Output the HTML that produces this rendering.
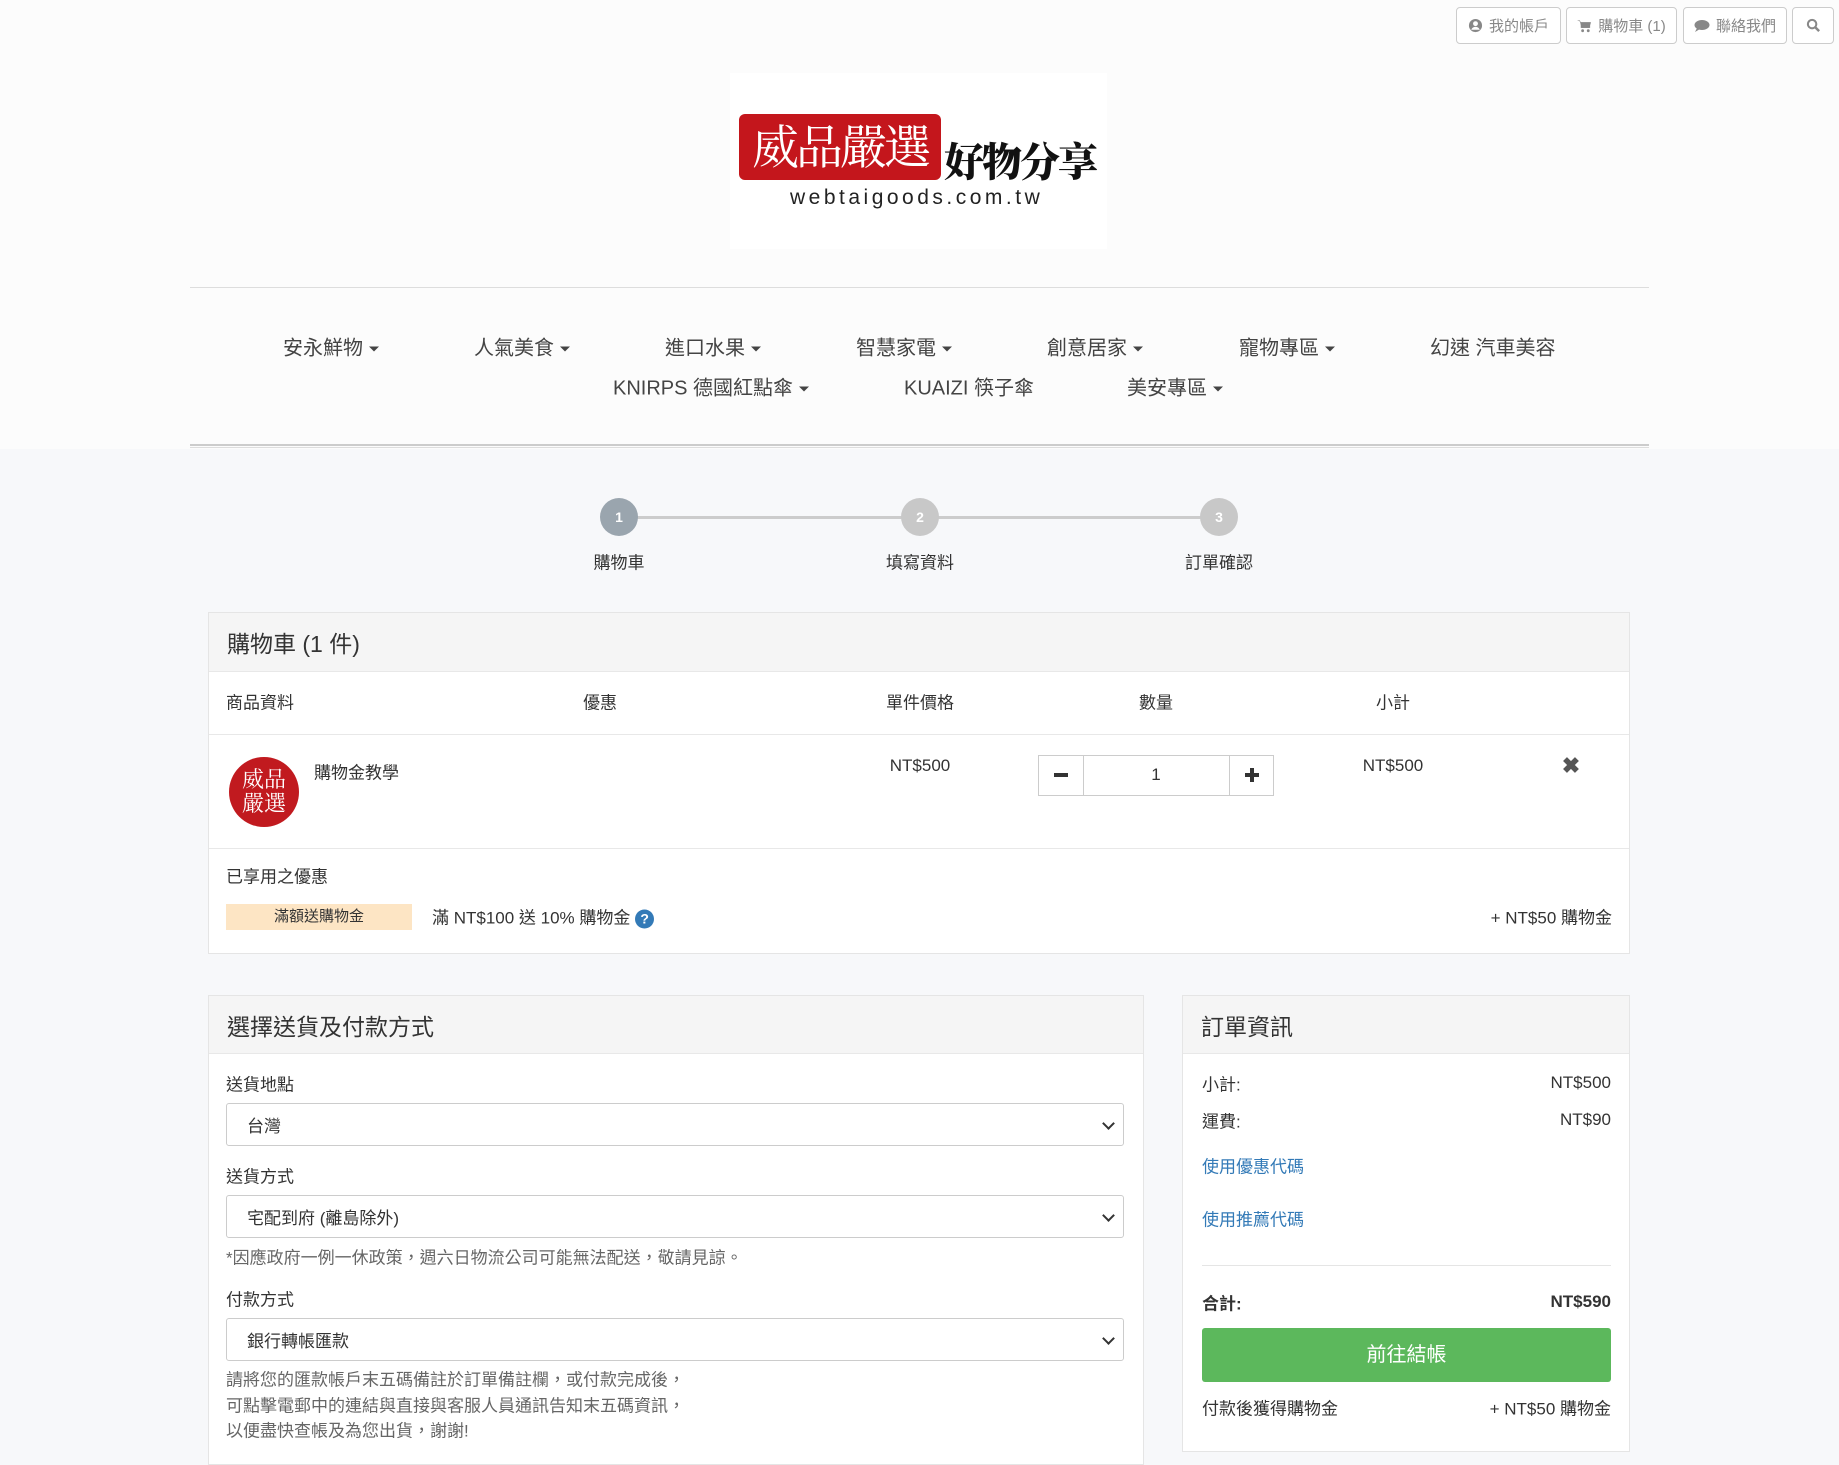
<!DOCTYPE html>
<html><head><meta charset="utf-8">
<style>
*{box-sizing:border-box;margin:0;padding:0}
body{width:1839px;height:1455px;overflow:hidden;background:#f7f8fa;font-family:"Liberation Sans","Noto Sans CJK TC",sans-serif;color:#333;font-size:17px;position:relative}
.a{position:absolute;white-space:nowrap}
.hdr{position:absolute;left:0;top:0;width:1839px;height:449px;background:#fcfcfc}
.tb{position:absolute;top:7px;height:37px;border:1px solid #ccc;border-radius:4px;background:#fff;color:#888;font-size:15px;display:flex;align-items:center;justify-content:center;gap:6px}
.nav{position:absolute;font-size:20px;color:#444;transform:translateY(-50%)}
.caret{display:inline-block;width:0;height:0;border-left:5px solid transparent;border-right:5px solid transparent;border-top:5px solid #444;vertical-align:middle;margin-left:6px}
.panel{position:absolute;background:#fff;border:1px solid #e5e5e5}
.ph{position:absolute;left:0;right:0;top:0;background:#f5f5f5;border-bottom:1px solid #e8e8e8;font-size:23px;padding-left:18px;display:flex;align-items:center}
.sel{position:absolute;left:226px;width:898px;height:43px;border:1px solid #ccc;border-radius:3px;background:#fff;padding-left:20px;display:flex;align-items:center;font-size:17px}
.sel:after{content:"";position:absolute;right:10px;top:15px;width:7px;height:7px;border-right:2px solid #333;border-bottom:2px solid #333;transform:rotate(45deg)}
.c{transform:translate(-50%,-50%)}
.m{transform:translateY(-50%)}
.step{position:absolute;width:38px;height:38px;border-radius:50%;color:#fff;font-size:14px;font-weight:bold;display:flex;align-items:center;justify-content:center;transform:translate(-50%,-50%)}
</style></head><body>
<div class="hdr"></div>
<div class="tb" style="left:1456px;width:105px"><svg width="15" height="15" viewBox="0 0 16 16"><circle cx="8" cy="8" r="7" fill="#888"/><circle cx="8" cy="6" r="2.6" fill="#fff"/><path d="M3.5 12.5c1-2.2 2.5-3 4.5-3s3.5.8 4.5 3" fill="#fff"/></svg>我的帳戶</div>
<div class="tb" style="left:1566px;width:111px"><svg width="15" height="14" viewBox="0 0 16 14"><path d="M0 1h3l1 2h11l-2 6H5L3 2" fill="#888"/><rect x="4" y="3" width="10" height="6" fill="#888"/><circle cx="6" cy="12" r="1.5" fill="#888"/><circle cx="12" cy="12" r="1.5" fill="#888"/></svg>購物車 (1)</div>
<div class="tb" style="left:1683px;width:104px"><svg width="16" height="14" viewBox="0 0 16 14"><ellipse cx="8" cy="6" rx="7.5" ry="5" fill="#888"/><path d="M3 9l-2 4 5-3z" fill="#888"/></svg>聯絡我們</div>
<div class="tb" style="left:1792px;width:42px"><svg width="15" height="15" viewBox="0 0 16 16"><circle cx="6.5" cy="6.5" r="4.5" fill="none" stroke="#888" stroke-width="2.2"/><path d="M10 10l4 4" stroke="#888" stroke-width="2.6"/></svg></div>

<div class="a" style="left:730px;top:73px;width:377px;height:176px;background:#fff"></div>
<div class="a" style="left:739px;top:114px;width:202px;height:66px;background:#c4161c;border-radius:6px;color:#fff;font-family:'Noto Serif CJK SC',serif;font-size:47px;line-height:62px;text-align:center;letter-spacing:-3px">威品嚴選</div>
<div class="a" style="left:944px;top:131px;font-family:'Noto Serif CJK SC',serif;font-size:40px;font-weight:900;color:#111;letter-spacing:-2px">好物分享</div>
<div class="a" style="left:790px;top:186px;font-size:21px;letter-spacing:3.5px;color:#222">webtaigoods.com.tw</div>

<div class="a" style="left:190px;top:287px;width:1459px;height:1px;background:#ddd"></div>
<div class="nav" style="left:283px;top:346px">安永鮮物<span class="caret"></span></div>
<div class="nav" style="left:474px;top:346px">人氣美食<span class="caret"></span></div>
<div class="nav" style="left:665px;top:346px">進口水果<span class="caret"></span></div>
<div class="nav" style="left:856px;top:346px">智慧家電<span class="caret"></span></div>
<div class="nav" style="left:1047px;top:346px">創意居家<span class="caret"></span></div>
<div class="nav" style="left:1239px;top:346px">寵物專區<span class="caret"></span></div>
<div class="nav" style="left:1430px;top:346px">幻速 汽車美容</div>
<div class="nav" style="left:613px;top:386px">KNIRPS 德國紅點傘<span class="caret"></span></div>
<div class="nav" style="left:904px;top:386px">KUAIZI 筷子傘</div>
<div class="nav" style="left:1127px;top:386px">美安專區<span class="caret"></span></div>
<div class="a" style="left:190px;top:444px;width:1459px;height:4px;border-top:2px solid #ccc;border-bottom:1px solid #ddd"></div>

<div class="a" style="left:619px;top:516px;width:600px;height:3px;background:#ccc"></div>
<div class="step" style="left:619px;top:517px;background:#9aa5ae">1</div>
<div class="step" style="left:920px;top:517px;background:#c8c8c8">2</div>
<div class="step" style="left:1219px;top:517px;background:#c8c8c8">3</div>
<div class="a c" style="left:619px;top:561px">購物車</div>
<div class="a c" style="left:920px;top:561px">填寫資料</div>
<div class="a c" style="left:1219px;top:561px">訂單確認</div>

<div class="panel" style="left:208px;top:612px;width:1422px;height:342px">
<div class="ph" style="height:59px">購物車 (1 件)</div>
</div>
<div class="a" style="left:209px;top:734px;width:1420px;height:1px;background:#e8e8e8"></div>
<div class="a" style="left:209px;top:848px;width:1420px;height:1px;background:#e8e8e8"></div>
<div class="a m" style="left:226px;top:701px">商品資料</div>
<div class="a m" style="left:583px;top:701px">優惠</div>
<div class="a c" style="left:920px;top:701px">單件價格</div>
<div class="a c" style="left:1156px;top:701px">數量</div>
<div class="a c" style="left:1393px;top:701px">小計</div>
<div class="a" style="left:229px;top:757px;width:70px;height:70px;border-radius:50%;background:#c11a1f;color:#fff;font-family:'Noto Serif CJK SC',serif;font-size:22px;line-height:24px;text-align:center;padding-top:10px">威品<br>嚴選</div>
<div class="a m" style="left:314px;top:771px">購物金教學</div>
<div class="a c" style="left:920px;top:766px">NT$500</div>
<div class="a" style="left:1038px;top:755px;width:236px;height:41px;border:1px solid #ccc;background:#fff"></div>
<div class="a" style="left:1083px;top:755px;width:1px;height:41px;background:#ccc"></div>
<div class="a" style="left:1229px;top:755px;width:1px;height:41px;background:#ccc"></div>
<div class="a" style="left:1054px;top:773px;width:14px;height:4px;background:#333"></div>
<div class="a" style="left:1245px;top:773px;width:14px;height:4px;background:#333"></div>
<div class="a" style="left:1250px;top:768px;width:4px;height:14px;background:#333"></div>
<div class="a c" style="left:1156px;top:775px">1</div>
<div class="a c" style="left:1393px;top:766px">NT$500</div>
<div class="a c" style="left:1571px;top:766px;font-size:22px;color:#555;font-weight:bold">✖</div>
<div class="a m" style="left:226px;top:875px">已享用之優惠</div>
<div class="a" style="left:226px;top:904px;width:186px;height:26px;background:#fde5c4;font-size:15px;text-align:center;line-height:26px">滿額送購物金</div>
<div class="a m" style="left:432px;top:916px">滿 NT$100 送 10% 購物金 <span style="display:inline-block;width:19px;height:19px;border-radius:50%;background:#337ab7;color:#fff;font-size:14px;font-weight:bold;text-align:center;line-height:19px;vertical-align:middle">?</span></div>
<div class="a m" style="right:227px;top:916px">+ NT$50 購物金</div>

<div class="panel" style="left:208px;top:995px;width:936px;height:470px">
<div class="ph" style="height:58px">選擇送貨及付款方式</div>
</div>
<div class="a m" style="left:226px;top:1083px">送貨地點</div>
<div class="sel" style="top:1103px">台灣</div>
<div class="a m" style="left:226px;top:1175px">送貨方式</div>
<div class="sel" style="top:1195px">宅配到府 (離島除外)</div>
<div class="a m" style="left:226px;top:1256px;color:#666">*因應政府一例一休政策，週六日物流公司可能無法配送，敬請見諒。</div>
<div class="a m" style="left:226px;top:1298px">付款方式</div>
<div class="sel" style="top:1318px">銀行轉帳匯款</div>
<div class="a m" style="left:226px;top:1378px;color:#666">請將您的匯款帳戶末五碼備註於訂單備註欄，或付款完成後，</div>
<div class="a m" style="left:226px;top:1404px;color:#666">可點擊電郵中的連結與直接與客服人員通訊告知末五碼資訊，</div>
<div class="a m" style="left:226px;top:1429px;color:#666">以便盡快查帳及為您出貨，謝謝!</div>

<div class="panel" style="left:1182px;top:995px;width:448px;height:457px">
<div class="ph" style="height:58px">訂單資訊</div>
</div>
<div class="a m" style="left:1202px;top:1083px">小計:</div>
<div class="a m" style="right:228px;top:1083px">NT$500</div>
<div class="a m" style="left:1202px;top:1120px">運費:</div>
<div class="a m" style="right:228px;top:1120px">NT$90</div>
<div class="a m" style="left:1202px;top:1165px;color:#337ab7">使用優惠代碼</div>
<div class="a m" style="left:1202px;top:1218px;color:#337ab7">使用推薦代碼</div>
<div class="a" style="left:1202px;top:1265px;width:409px;height:1px;background:#e5e5e5"></div>
<div class="a m" style="left:1202px;top:1302px;font-weight:bold">合計:</div>
<div class="a m" style="right:228px;top:1302px;font-weight:bold">NT$590</div>
<div class="a" style="left:1202px;top:1328px;width:409px;height:54px;background:#5cb85c;border-radius:3px;color:#fff;font-size:20px;text-align:center;line-height:54px">前往結帳</div>
<div class="a m" style="left:1202px;top:1407px">付款後獲得購物金</div>
<div class="a m" style="right:228px;top:1407px">+ NT$50 購物金</div>
</body></html>
